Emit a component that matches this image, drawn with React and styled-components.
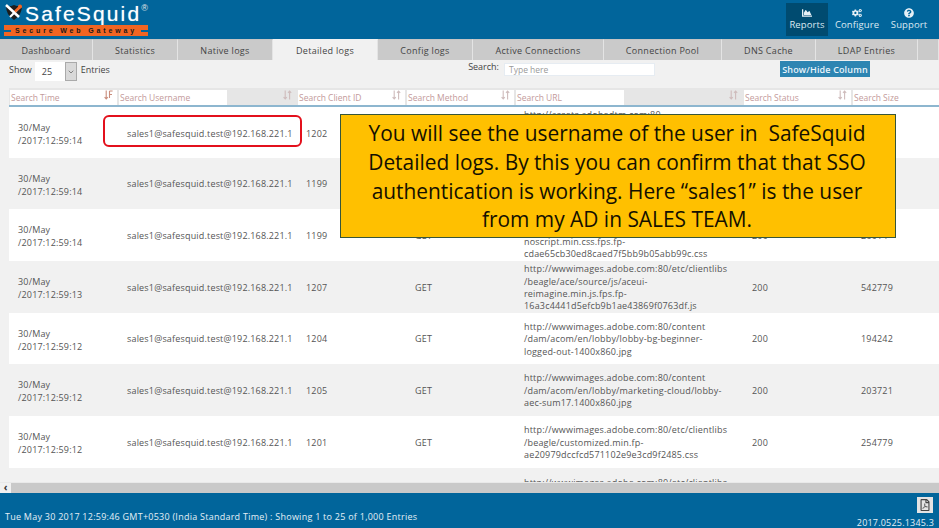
import React from "react";
import styled, { createGlobalStyle } from "styled-components";
import { FaChartArea, FaCogs, FaQuestionCircle, FaRegFilePdf } from "react-icons/fa";
import { FiChevronDown } from "react-icons/fi";

const Global = createGlobalStyle`
  html, body { margin: 0; padding: 0; width: 939px; height: 528px; overflow: hidden; background: #f1f1f1; }
  body { font-family: "Open Sans", "Noto Sans", sans-serif; font-size: 9px; color: #555; }
  * { box-sizing: border-box; }
`;

const Page = styled.div`
  position: relative;
  width: 939px;
  height: 528px;
  display: flex;
  flex-direction: column;
  overflow: hidden;
`;

const Header = styled.header`
  height: 39px;
  flex: none;
  background: #01659b;
  display: flex;
  justify-content: space-between;
  padding: 3px 7px 0 3px;
`;

const Logo = styled.div`
  width: 146px;
  display: flex;
  flex-direction: column;
`;
const LogoTop = styled.div`
  height: 21px;
  display: flex;
  align-items: flex-start;
  padding-left: 1px;
`;
const LogoName = styled.span`
  font-family: "Liberation Sans", sans-serif;
  font-size: 21px;
  line-height: 21px;
  letter-spacing: 2.15px;
  color: #fff;
  margin-left: 1px;
  text-shadow: 0 0 1px rgba(255, 255, 255, 0.6);
`;
const LogoReg = styled.span`
  font-family: "Liberation Sans", sans-serif;
  font-size: 9px;
  line-height: 11px;
  color: #e8e8e8;
`;
const LogoStrap = styled.div`
  position: relative;
  height: 11px;
  margin: 1px 0 0 1px;
  width: 144px;
  background: #f26522;
  display: flex;
  align-items: center;
  justify-content: center;
  font-family: "Liberation Sans", sans-serif;
  font-weight: 700;
  font-size: 7px;
  letter-spacing: 2.85px;
  color: #1a1a1a;
  white-space: nowrap;
`;
const StrapLine = styled.i`
  position: absolute;
  top: 5px;
  ${(p) => (p.$right ? "right: 0;" : "left: 0;")}
  width: 7px;
  height: 2px;
  background: #01659b;
`;

const Nav = styled.nav`
  display: flex;
  height: 33px;
`;
const NavItem = styled.div`
  width: ${(p) => p.$w}px;
  background: ${(p) => (p.$active ? "#004b70" : "transparent")};
  color: #dbe9f2;
  font-size: 9.5px;
  letter-spacing: 0.1px;
  display: flex;
  flex-direction: column;
  align-items: center;
  padding-top: 5px;
  gap: 0;
  white-space: nowrap;
  svg { width: 10px; height: 10px; color: #e6f0f6; }
`;

const Tabs = styled.div`
  height: 21px;
  flex: none;
  display: flex;
  background: #cacaca;
`;
const Tab = styled.div`
  width: ${(p) => p.$w}px;
  flex: none;
  height: 100%;
  background: ${(p) => (p.$active ? "#f1f1f1" : "#cacaca")};
  border-right: 1px solid #e4e4e4;
  border-top: 1px solid ${(p) => (p.$active ? "#f1f1f1" : "#c4c4c4")};
  display: flex;
  align-items: center;
  justify-content: center;
  font-size: 9px;
  letter-spacing: 0.3px;
  color: #444;
`;

const Toolbar = styled.div`
  height: 28px;
  flex: none;
  background: #f1f1f1;
  display: flex;
  padding: 2px 69px 0 9px;
`;
const Label = styled.span`
  font-size: 9px;
  color: #444;
  line-height: 12px;
  margin-top: ${(p) => p.$top || 2}px;
`;
const SelectBox = styled.div`
  width: 42px;
  height: 19px;
  margin: 0 4px 0 3px;
  background: #fff;
  display: flex;
  align-items: center;
  justify-content: space-between;
  padding-left: 7px;
  font-size: 9px;
  color: #444;
`;
const SelectArrow = styled.span`
  width: 12px;
  height: 19px;
  background: #d9d9d9;
  border: 1px solid #aaa;
  display: flex;
  align-items: center;
  justify-content: center;
  svg { width: 8px; height: 8px; color: #555; }
`;
const SearchArea = styled.div`
  margin-left: auto;
  display: flex;
  margin-right: 125px;
`;
const SearchField = styled.div`
  width: 151px;
  height: 13px;
  margin: 1px 0 0 5px;
  background: #fff;
  border: 1px solid #e6ecf2;
  padding-left: 4px;
  font-size: 8.5px;
  line-height: 11px;
  color: #9a9a9a;
`;
const ColumnButton = styled.div`
  width: 90px;
  height: 16px;
  margin-top: -1px;
  background: #2d85b2;
  color: #e9f4fa;
  font-size: 9px;
  font-weight: 600;
  letter-spacing: 0.15px;
  display: flex;
  align-items: center;
  justify-content: center;
  white-space: nowrap;
`;

const TableArea = styled.div`
  flex: 1;
  min-height: 0;
  margin-left: 9px;
  overflow: hidden;
  background: #f1f1f1;
`;
const Grid = styled.div`
  display: grid;
  grid-template-columns: 109px 179px 109px 109px 228px 109px 86px;
`;
const HeadRow = styled(Grid)`
  height: 19px;
  padding: 2px 0 0 1px;
  background: #e6e6e6;
  border-bottom: 2px solid #8db6cf;
`;
const HeadCell = styled.div`
  position: relative;
  height: 15px;
  display: flex;
`;
const HeadInput = styled.div`
  width: ${(p) => p.$w || 107}px;
  height: 15px;
  background: #fff;
  font-size: 8.5px;
  line-height: 16px;
  padding-left: 1px;
  color: #c39a9a;
  white-space: nowrap;
  overflow: hidden;
`;
const SortMark = styled.svg`
  position: absolute;
  top: 0;
  right: 6px;
  width: 9px;
  height: 10px;
  color: ${(p) => (p.$active ? "#c98d7c" : "#cfbcbc")};
`;
const ClipArea = styled.div`
  height: 375px;
  overflow: hidden;
`;
const Row = styled(Grid)`
  height: ${(p) => p.$h}px;
  background: ${(p) => (p.$odd ? "#fff" : "#f1f1f1")};
  padding: 2px 0 0 1px;
  align-items: center;
  font-size: 9px;
  line-height: 12.4px;
  letter-spacing: 0.18px;
  color: #555;
`;
const Cell = styled.div`
  padding-left: 8px;
  white-space: nowrap;
`;
const TimeCell = styled(Cell)`
  line-height: 13px;
`;
const TopCell = styled(Cell)`
  align-self: start;
  padding-top: 7px;
`;
const ScrollBar = styled.div`
  height: 11px;
  flex: none;
  display: flex;
  background: #c9c9c9;
  border-top: 1px solid #e9e9e9;
`;
const ScrollArrow = styled.span`
  width: 11px;
  background: #f1f1f1;
  color: #333;
  font-size: 10px;
  line-height: 9px;
  text-align: center;
  font-weight: 700;
`;

const Footer = styled.footer`
  height: 35px;
  flex: none;
  background: #01659b;
  color: #e4eff6;
  display: flex;
  justify-content: space-between;
  padding: 4px 5px 0 5px;
  font-size: 9px;
  letter-spacing: 0.25px;
`;
const FooterText = styled.div`
  margin-top: 14px;
  line-height: 12px;
`;
const FooterRight = styled.div`
  display: flex;
  flex-direction: column;
  align-items: flex-end;
  gap: 4px;
  font-size: 9px;
  line-height: 11px;
  letter-spacing: 0.2px;
`;
const PdfButton = styled.div`
  width: 16px;
  height: 17px;
  margin-right: 1px;
  background: #e4e4e4;
  display: flex;
  align-items: center;
  justify-content: center;
  svg { width: 10px; height: 12px; color: #444; }
`;

const Callout = styled.div`
  position: absolute;
  left: 340px;
  top: 114px;
  width: 556px;
  height: 124px;
  background: #ffc000;
  border: 1px solid #37563a;
  padding: 4px 2px 0 0;
  text-align: center;
  font-size: 20.9px;
  line-height: 28.8px;
  color: #141000;
  white-space: nowrap;
`;
const Highlight = styled.div`
  position: absolute;
  left: 103px;
  top: 115px;
  width: 199px;
  height: 32px;
  border: 2px solid #e3101c;
  border-radius: 6px;
`;

const SortIcon = ({ active }) => (
  <SortMark $active={active} viewBox="0 0 9 10" fill="none" stroke="currentColor" strokeWidth="1.1">
    <path d="M2.2 0.5V9M0.6 7.2L2.2 9L3.8 7.2" />
    {active ? <path d="M5.5 1H8.6M5.5 1V8M5.5 4.5H8" /> : <path d="M6.6 9.5V1M5 2.8L6.6 1L8.2 2.8" />}
  </SortMark>
);

const LogoMark = () => (
  <svg width="20" height="18" viewBox="0 0 20 18">
    <path d="M2 3Q6 4 10 2Q14 4 18 3Q18 12 10 17Q2 12 2 3Z" fill="#1d1d1d" />
    <path d="M2 2L15 14" stroke="#fff" strokeWidth="2.6" />
    <path d="M17 3L6 14" stroke="#fff" strokeWidth="2.2" />
    <path d="M17 3L11 8.5" stroke="#f26522" strokeWidth="2.4" />
    <circle cx="16" cy="3.5" r="2" fill="#f26522" />
  </svg>
);

const cols = [
  ["Search Time", 107, true, true],
  ["Search Username", 108, true],
  ["Search Client ID", 107, true],
  ["Search Method", 107, true],
  ["Search URL", 108, true],
  ["Search Status", 107, true],
  ["Search Size", 86],
];

const U = "sales1@safesquid.test@192.168.221.1";
const N = "\u00a0";
const rows = [
  { time: "12:59:14", id: 1202, url: ["http://assets.adobedtm.com:80", N, N, N], h: 51 },
  { time: "12:59:14", id: 1199, url: [N], h: 51 },
  { time: "12:59:14", id: 1199, m: "GET", url: [N, N, "noscript.min.css.fps.fp-", "cdae65cb30ed8caed7f5bb9b05abb99c.css"], s: 200, size: 26014, h: 52 },
  { time: "12:59:13", id: 1207, m: "GET", url: ["http://wwwimages.adobe.com:80/etc/clientlibs", "/beagle/ace/source/js/aceui-", "reimagine.min.js.fps.fp-", "16a3c4441d5efcb9b1ae43869f0763df.js"], s: 200, size: 542779, h: 52 },
  { time: "12:59:12", id: 1204, m: "GET", url: ["http://wwwimages.adobe.com:80/content", "/dam/acom/en/lobby/lobby-bg-beginner-", "logged-out-1400x860.jpg"], s: 200, size: 194242, h: 51 },
  { time: "12:59:12", id: 1205, m: "GET", url: ["http://wwwimages.adobe.com:80/content", "/dam/acom/en/lobby/marketing-cloud/lobby-", "aec-sum17.1400x860.jpg"], s: 200, size: 203721, h: 52 },
  { time: "12:59:12", id: 1201, m: "GET", url: ["http://wwwimages.adobe.com:80/etc/clientlibs", "/beagle/customized.min.fp-", "ae20979dccfcd571102e9e3cd9f2485.css"], s: 200, size: 254779, h: 52 },
];

const tabs = [
  ["Dashboard", 93], ["Statistics", 85], ["Native logs", 95], ["Detailed logs", 105, true],
  ["Config logs", 95], ["Active Connections", 131], ["Connection Pool", 118], ["DNS Cache", 94], ["LDAP Entries", 102], ["", 21],
];

export default function App() {
  return (
    <Page>
      <Global />
      <Header>
        <Logo>
          <LogoTop>
            <LogoMark />
            <LogoName>SafeSquid</LogoName>
            <LogoReg>®</LogoReg>
          </LogoTop>
          <LogoStrap>
            <StrapLine />
            Secure Web Gateway
            <StrapLine $right />
          </LogoStrap>
        </Logo>
        <Nav>
          <NavItem $w={42} $active><FaChartArea />Reports</NavItem>
          <NavItem $w={58}><FaCogs />Configure</NavItem>
          <NavItem $w={46}><FaQuestionCircle />Support</NavItem>
        </Nav>
      </Header>
      <Tabs>
        {tabs.map(([t, w, a]) => <Tab key={t + w} $w={w} $active={a}>{t}</Tab>)}
      </Tabs>
      <Toolbar>
        <Label>Show</Label>
        <SelectBox>25<SelectArrow><FiChevronDown /></SelectArrow></SelectBox>
        <Label>Entries</Label>
        <SearchArea>
          <Label $top={-1}>Search:</Label>
          <SearchField>Type here</SearchField>
        </SearchArea>
        <ColumnButton>Show/Hide Column</ColumnButton>
      </Toolbar>
      <TableArea>
        <HeadRow>
          {cols.map(([t, w, sort, active]) => (
            <HeadCell key={t}>
              <HeadInput $w={w}>{t}</HeadInput>
              {sort && <SortIcon active={active} />}
            </HeadCell>
          ))}
        </HeadRow>
        <ClipArea>
          {rows.map((r, i) => (
            <Row key={i} $odd={i % 2 === 0} $h={r.h}>
              <TimeCell>30/May<br />/2017:{r.time}</TimeCell>
              <Cell>{U}</Cell>
              <Cell>{r.id}</Cell>
              <Cell>{r.m}</Cell>
              <Cell>{r.url.map((l, j) => <React.Fragment key={j}>{j > 0 && <br />}{l}</React.Fragment>)}</Cell>
              <Cell>{r.s}</Cell>
              <Cell>{r.size}</Cell>
            </Row>
          ))}
          <Row $h={52}>
            <Cell />
            <Cell />
            <Cell />
            <Cell />
            <TopCell>http://wwwimages.adobe.com:80/etc/clientlibs</TopCell>
          </Row>
        </ClipArea>
      </TableArea>
      <ScrollBar><ScrollArrow>‹</ScrollArrow></ScrollBar>
      <Footer>
        <FooterText>Tue May 30 2017 12:59:46 GMT+0530 (India Standard Time) : Showing 1 to 25 of 1,000 Entries</FooterText>
        <FooterRight>
          <PdfButton><FaRegFilePdf /></PdfButton>
          2017.0525.1345.3
        </FooterRight>
      </Footer>
      <Highlight />
      <Callout>
        You will see the username of the user in&nbsp; SafeSquid<br />
        Detailed logs. By this you can confirm that that SSO<br />
        authentication is working. Here “sales1” is the user<br />
        from my AD in SALES TEAM.
      </Callout>
    </Page>
  );
}
